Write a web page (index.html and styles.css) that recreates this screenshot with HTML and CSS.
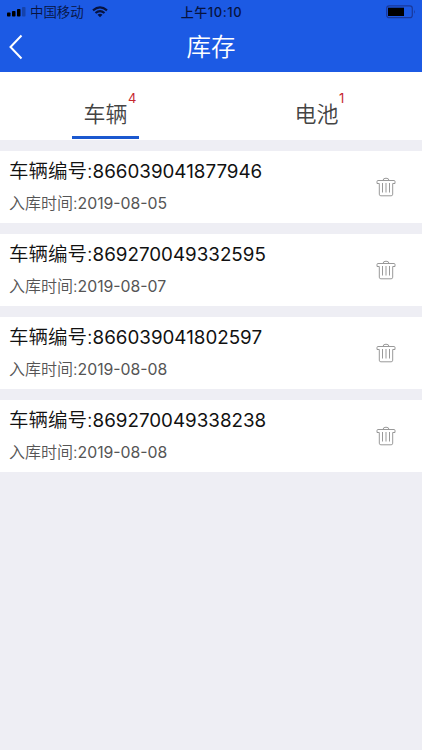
FILE: index.html
```
<!DOCTYPE html>
<html lang="zh-CN">
<head>
    <meta charset="UTF-8">
    <meta name="viewport" content="width=device-width, initial-scale=1.0">
    <title>库存</title>
    <link rel="stylesheet" href="styles.css">
</head>
<body>
    <!-- Shared icons -->
    <svg class="sprite">
        <symbol id="trash" viewBox="0 0 20 20">
            <path d="M7 3.500Q7 1.200 10 1.200T13 3.500M2 3.500H18Q19 3.500 19 4.500V6.500H16.700V17.200Q16.700 18.800 15.100 18.800H4.900Q3.300 18.800 3.300 17.200V6.500H1V4.500Q1 3.500 2 3.500ZM6.500 6V15.500M10 6V15.500M13.500 6V15.500"/>
        </symbol>
    </svg>

    <header class="header">
        <div class="status">
            <div class="carrier">
                <svg class="signal" width="19" height="10" viewBox="0 0 19 10">
                    <rect x="0" y="5.500" width="3.500" height="4" rx="0.800"/>
                    <rect x="5" y="4" width="3.500" height="5.500" rx="0.800"/>
                    <rect x="10" y="2" width="3.500" height="7.500" rx="0.800"/>
                    <rect x="15" y="0" width="3.500" height="9.500" rx="0.800" opacity="0.250"/>
                </svg>
                <span>中国移动</span>
                <svg class="wifi" width="16" height="12" viewBox="0 0 16 12">
                    <path d="M1 4.300Q8-1.600 15 4.300M3.500 7Q8 3.200 12.500 7"/>
                    <path class="dot" d="M5.500 8.700Q8 6.900 10.500 8.700L8 11.300z"/>
                </svg>
            </div>
            <div class="time">上午10:10</div>
            <svg class="battery" width="30" height="14" viewBox="0 0 30 14">
                <rect class="shell" x="0.700" y="0.900" width="25.600" height="11.800" rx="2.500"/>
                <rect x="2" y="2.700" width="16" height="8.300"/>
                <path class="cap" d="M28 4.700q1.500 2 0 4z"/>
            </svg>
        </div>
        <div class="nav">
            <svg class="back" width="14" height="26" viewBox="0 0 14 26">
                <path d="M12.500 1.500L1.500 13l11 11.500"/>
            </svg>
            <h1>库存</h1>
        </div>
    </header>

    <div class="tabs">
        <div class="tab active"><span class="label">车辆<sup>4</sup></span></div>
        <div class="tab"><span class="label">电池<sup>1</sup></span></div>
    </div>

    <div class="list">
        <div class="item">
            <div class="info">
                <div class="number">车辆编号:<b>866039041877946</b></div>
                <div class="date">入库时间:<b>2019-08-05</b></div>
            </div>
            <svg class="trash"><use href="#trash"/></svg>
        </div>
        <div class="item">
            <div class="info">
                <div class="number">车辆编号:<b>869270049332595</b></div>
                <div class="date">入库时间:<b>2019-08-07</b></div>
            </div>
            <svg class="trash"><use href="#trash"/></svg>
        </div>
        <div class="item">
            <div class="info">
                <div class="number">车辆编号:<b>866039041802597</b></div>
                <div class="date">入库时间:<b>2019-08-08</b></div>
            </div>
            <svg class="trash"><use href="#trash"/></svg>
        </div>
        <div class="item">
            <div class="info">
                <div class="number">车辆编号:<b>869270049338238</b></div>
                <div class="date">入库时间:<b>2019-08-08</b></div>
            </div>
            <svg class="trash"><use href="#trash"/></svg>
        </div>
    </div>
</body>
</html>
```
FILE: styles.css
```
* {
    box-sizing: border-box;
}
body {
    margin: 0;
    min-height: 750px;
    background-color: #eeeef4;
    font-family: Inter, "Noto Sans CJK SC", sans-serif;
    font-weight: 350;
    color: #111;
}
b {
    font-weight: 400;
}
svg {
    display: block;
    flex: none;
}
.sprite {
    display: none;
}
.header {
    height: 72px;
    background-color: #1c5ae4;
}
.status {
    display: grid;
    grid-template-columns: 1fr auto 1fr;
    align-items: center;
    height: 24px;
    padding: 0 6px 0 7px;
    font-size: 13.4px;
    line-height: 24px;
    color: #07133f;
}
.carrier {
    display: flex;
    align-items: center;
}
.signal {
    margin-right: 4px;
}
.wifi {
    margin-left: 8px;
    fill: none;
    stroke: #07133f;
    stroke-width: 2.200;
}
.wifi .dot {
    fill: #07133f;
    stroke: none;
}
.time {
    font-weight: 500;
    font-size: 13px;
    letter-spacing: 0.6px;
}
.battery {
    justify-self: end;
}
.shell {
    fill: none;
    stroke: #1a3899;
    stroke-width: 1.2;
}
.cap {
    fill: #1a3899;
}
.nav {
    display: grid;
    grid-template-columns: 60px 1fr 60px;
    align-items: center;
    height: 46px;
}
.back {
    margin-left: 9px;
    fill: none;
    stroke: #fff;
    stroke-width: 2;
}
h1 {
    margin: 0;
    font-size: 24.5px;
    font-weight: 350;
    line-height: 44px;
    text-align: center;
    color: #fff;
}
.tabs {
    display: flex;
    height: 68px;
    background-color: #fff;
}
.tab {
    display: flex;
    flex: 1;
    justify-content: center;
}
.label {
    position: relative;
    width: 67px;
    height: 67px;
    padding-top: 22px;
    font-size: 22px;
    line-height: 40px;
    text-align: center;
    color: #444;
}
.active .label {
    border-bottom: 3px solid #1b58cf;
}
.label sup {
    position: absolute;
    top: 18px;
    left: 56px;
    font-size: 13px;
    line-height: 16px;
    font-weight: 400;
    color: #c6282f;
}
.list {
    display: flex;
    flex-direction: column;
    gap: 11px;
    margin-top: 11px;
}
.item {
    display: flex;
    align-items: center;
    justify-content: space-between;
    height: 72.1px;
    padding: 0 26px 0 9px;
    background-color: #fff;
}
.info {
    padding-bottom: 3px;
}
.number {
    font-size: 19.5px;
    line-height: 34px;
    white-space: nowrap;
}
.number b {
    font-size: 18.8px;
}
.date {
    font-size: 16px;
    line-height: 28px;
    color: #555;
}
.date b {
    font-size: 15.8px;
}
.trash {
    width: 20px;
    height: 20px;
    fill: none;
    stroke: #999;
    stroke-width: 1;
}
```
